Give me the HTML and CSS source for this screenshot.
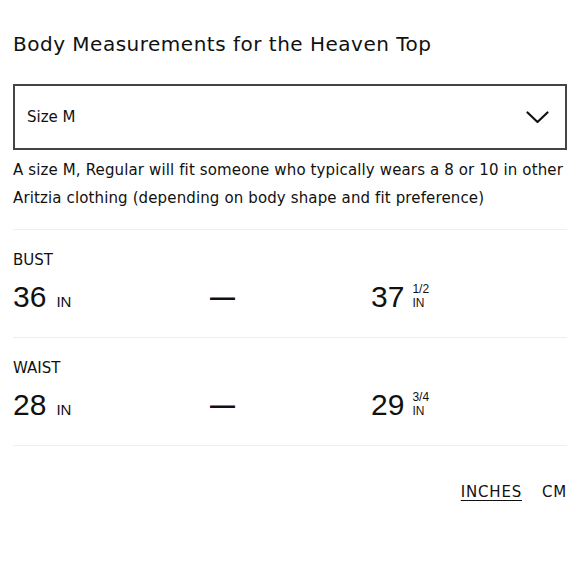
FILE: index.html
```html
<!DOCTYPE html>
<html lang="en">
<head>
<meta charset="utf-8">
<title>Body Measurements</title>
<link rel="stylesheet" href="styles.css">
</head>
<body>
<main class="panel">
  <h1 class="title">Body Measurements for the Heaven Top</h1>
  <div class="select">
    <span class="select-label">Size M</span>
    <svg class="chevron" width="23" height="13" viewBox="0 0 23 13" aria-hidden="true">
      <polyline points="1.5,1.5 11.5,11 21.5,1.5" fill="none" stroke="#111" stroke-width="2.2" stroke-linecap="round" stroke-linejoin="round"/>
    </svg>
  </div>
  <p class="desc">A size M, Regular will fit someone who typically wears a 8 or 10 in other Aritzia clothing (depending on body shape and fit preference)</p>

  <section class="row">
    <div class="label">BUST</div>
    <div class="values">
      <div class="val"><span class="num">36</span><span class="unit">IN</span></div>
      <div class="dash">—</div>
      <div class="val"><span class="num">37</span><span class="frac"><span class="frac-top">1/2</span><span class="frac-unit">IN</span></span></div>
    </div>
  </section>

  <section class="row">
    <div class="label">WAIST</div>
    <div class="values">
      <div class="val"><span class="num">28</span><span class="unit">IN</span></div>
      <div class="dash">—</div>
      <div class="val"><span class="num">29</span><span class="frac"><span class="frac-top">3/4</span><span class="frac-unit">IN</span></span></div>
    </div>
  </section>

  <div class="units">
    <span class="unit-opt active">INCHES</span>
    <span class="unit-opt">CM</span>
  </div>
</main>
</body>
</html>
```

FILE: styles.css
```css
* { box-sizing: border-box; }

html, body {
  margin: 0;
  padding: 0;
  background: #fff;
}

body {
  font-family: "DejaVu Sans", "Noto Sans", sans-serif;
  color: #111;
}

.panel {
  padding: 32px 13px 0 13px;
}

.title {
  margin: 0 0 28px 0;
  font-size: 20px;
  line-height: 24px;
  font-weight: 400;
  letter-spacing: 0.5px;
}

.select {
  height: 66px;
  border: 2px solid #444;
  display: flex;
  align-items: center;
  justify-content: space-between;
  padding: 0 16px 0 12px;
}

.select-label {
  font-size: 15px;
  line-height: 20px;
}

.chevron {
  display: block;
}

.desc {
  margin: 7px 0 0 0;
  padding-bottom: 17px;
  font-size: 15px;
  line-height: 27.5px;
  letter-spacing: 0.13px;
}

.row {
  border-top: 1px solid #eeeeee;
  padding: 20px 0 24px 0;
}

.label {
  font-size: 15px;
  line-height: 20px;
  margin-bottom: 11px;
}

.values {
  display: grid;
  grid-template-columns: 197px 161px 1fr;
  grid-template-rows: 32px;
  font-family: "Liberation Sans", Arial, sans-serif;
  line-height: 32px;
}

.num {
  font-size: 30px;
}

.unit {
  font-size: 15px;
  margin-left: 10px;
}

.dash {
  font-size: 25px;
  font-weight: 700;
}

.frac {
  display: inline-block;
  vertical-align: baseline;
  margin-left: 8px;
  font-size: 12px;
}

.frac-top,
.frac-unit {
  display: block;
  line-height: 13.8px;
}

.units {
  border-top: 1px solid #eeeeee;
  padding-top: 36px;
  display: flex;
  justify-content: flex-end;
  gap: 20px;
  padding-right: 0;
}

.unit-opt {
  font-size: 15px;
  line-height: 20px;
  letter-spacing: 0.8px;
}

.unit-opt.active {
  text-decoration: underline;
  text-underline-offset: 3px;
  text-decoration-thickness: 1px;
}
```
